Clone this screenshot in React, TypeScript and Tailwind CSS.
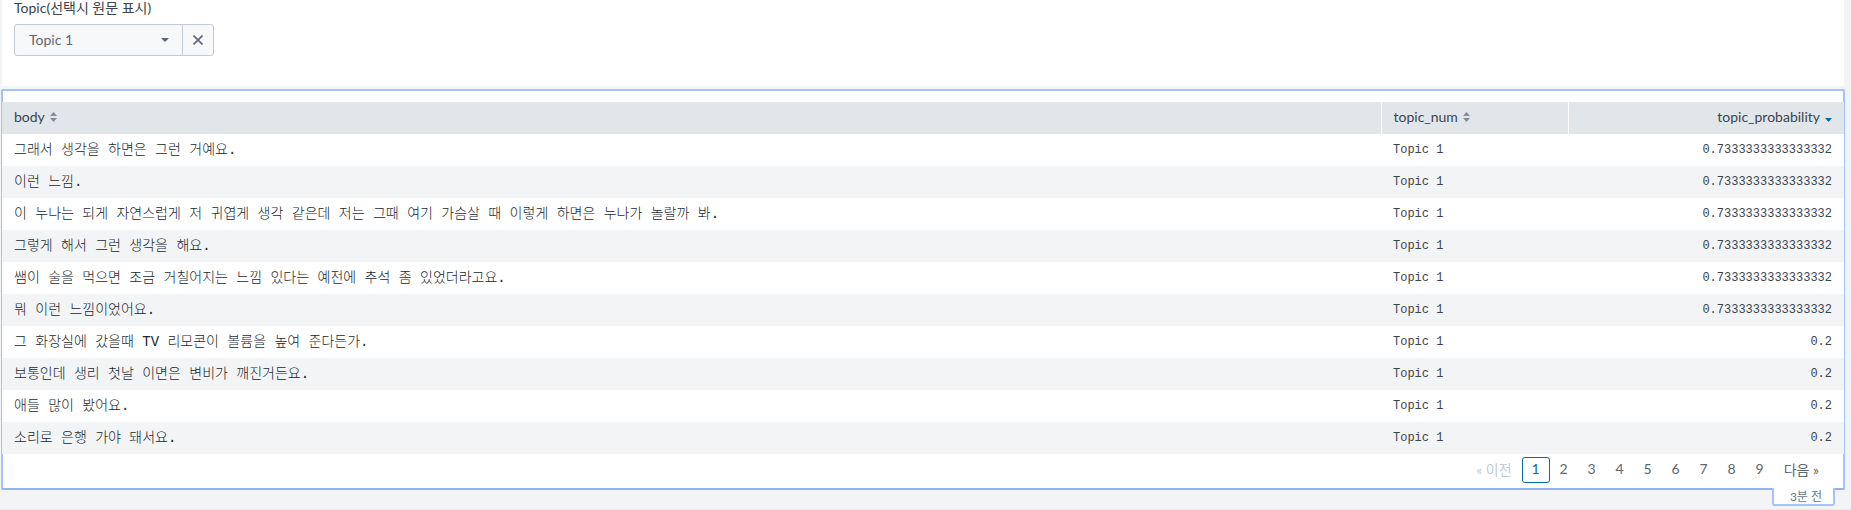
import { useState } from "react";

type Row = { body: string; topic: string; probability: string };

const rows: Row[] = [
  { body: "그래서 생각을 하면은 그런 거예요.", topic: "Topic 1", probability: "0.7333333333333332" },
  { body: "이런 느낌.", topic: "Topic 1", probability: "0.7333333333333332" },
  {
    body: "이 누나는 되게 자연스럽게 저 귀엽게 생각 같은데 저는 그때 여기 가슴살 때 이렇게 하면은 누나가 놀랄까 봐.",
    topic: "Topic 1",
    probability: "0.7333333333333332",
  },
  { body: "그렇게 해서 그런 생각을 해요.", topic: "Topic 1", probability: "0.7333333333333332" },
  {
    body: "쌤이 술을 먹으면 조금 거칠어지는 느낌 있다는 예전에 추석 좀 있었더라고요.",
    topic: "Topic 1",
    probability: "0.7333333333333332",
  },
  { body: "뭐 이런 느낌이었어요.", topic: "Topic 1", probability: "0.7333333333333332" },
  { body: "그 화장실에 갔을때 TV 리모콘이 볼륨을 높여 준다든가.", topic: "Topic 1", probability: "0.2" },
  { body: "보통인데 생리 첫날 이면은 변비가 깨진거든요.", topic: "Topic 1", probability: "0.2" },
  { body: "애들 많이 봤어요.", topic: "Topic 1", probability: "0.2" },
  { body: "소리로 은행 가야 돼서요.", topic: "Topic 1", probability: "0.2" },
];

const pages = [1, 2, 3, 4, 5, 6, 7, 8, 9];

function SortIcon() {
  return (
    <svg className="h-2.5 w-[7px] shrink-0" viewBox="0 0 7 10" fill="#818d99" aria-hidden="true">
      <path d="M0 4 3.5 0 7 4ZM0 6H7L3.5 10Z" />
    </svg>
  );
}

function Caret({ className }: { className: string }) {
  return (
    <svg className={className} viewBox="0 0 8 4" preserveAspectRatio="none" fill="currentColor" aria-hidden="true">
      <path d="M0 0H8L4 4Z" />
    </svg>
  );
}

export default function App() {
  const [topic, setTopic] = useState("Topic 1");
  const [page, setPage] = useState(1);

  return (
    <div className="min-h-screen border-b border-[#e8eaec] bg-[#f2f4f5] font-['Lato','Noto_Sans_CJK_KR',sans-serif] text-sm text-[#3c444d]">
      <section className="mr-[7px] ml-0.5 bg-white px-3 pb-[30px]">
        <label htmlFor="topic" className="block h-6 leading-4">
          Topic(선택시 원문 표시)
        </label>
        <div className="flex h-8">
          <div className="relative">
            <select
              id="topic"
              value={topic}
              onChange={(e) => setTopic(e.target.value)}
              className="h-8 w-[169px] appearance-none rounded-l-[3px] border border-[#c3cbd4] bg-[#f7f8fa] pr-8 pb-px pl-3.5 text-[#5c6773]"
            >
              <option>Topic 1</option>
              <option>Topic 2</option>
            </select>
            <Caret className="pointer-events-none absolute top-3.5 right-3.5 h-1 w-2 text-[#5c6773]" />
          </div>
          <button
            type="button"
            aria-label="Clear"
            className="-ml-px flex w-8 items-center justify-center rounded-r-[3px] border border-[#c3cbd4] bg-[#f7f8fa] text-[#5c6773]"
          >
            <svg className="size-2.5" viewBox="0 0 10 10" stroke="currentColor" strokeWidth="1.6" aria-hidden="true">
              <path d="M0.5 0.5 9.5 9.5M9.5 0.5 0.5 9.5" />
            </svg>
          </button>
        </div>
      </section>

      <section className="relative mt-[3px] mr-1.5 ml-px rounded-xs border-2 border-[#a3c2ff] border-b-[#8fb3f5] bg-white pt-[11px]">
        <div className="-mx-px">
          <table className="w-full table-fixed border-collapse">
            <colgroup>
              <col />
              <col className="w-[187px]" />
              <col className="w-[276px]" />
            </colgroup>
            <thead>
              <tr className="h-8 bg-[#e1e6eb]">
                <th scope="col" className="px-3 pb-0.5 text-left font-normal">
                  <span className="flex items-center gap-[5px]">
                    body <SortIcon />
                  </span>
                </th>
                <th scope="col" className="border-l border-white px-3 pb-0.5 text-left font-normal">
                  <span className="flex items-center gap-[5px]">
                    topic_num <SortIcon />
                  </span>
                </th>
                <th scope="col" className="border-l border-white px-3 pb-0.5 font-normal">
                  <span className="flex items-center justify-end gap-[5px]">
                    topic_probability <Caret className="mt-1.5 h-1 w-[7px] text-[#006eaa]" />
                  </span>
                </th>
              </tr>
            </thead>
            <tbody>
              {rows.map((row) => (
                <tr key={row.body} className="h-8 bg-white even:bg-[#f2f4f5]">
                  <td className="px-3 font-['Liberation_Mono','Noto_Sans_CJK_KR',monospace] leading-4 font-light text-[#20272e]">
                    {row.body}
                  </td>
                  <td className="px-3 font-['Liberation_Mono',monospace] text-xs">{row.topic}</td>
                  <td className="px-3 text-right font-['Liberation_Mono',monospace] text-xs">{row.probability}</td>
                </tr>
              ))}
            </tbody>
          </table>
        </div>

        <nav aria-label="Pagination" className="flex h-[34px] items-center justify-end pr-3 pb-0.5 text-[#5c6773]">
          <button type="button" disabled className="h-[26px] px-2.5 text-[#c3cbd4]">
            « 이전
          </button>
          {pages.map((n) => (
            <button
              key={n}
              type="button"
              aria-current={n === page ? "page" : undefined}
              onClick={() => setPage(n)}
              className={
                n === page
                  ? "h-[26px] w-7 rounded-[3px] border border-[#006eaa] pb-0.5 text-[#006eaa]"
                  : "h-[26px] w-7 pb-0.5 text-[#5c6773]"
              }
            >
              {n}
            </button>
          ))}
          <button type="button" className="h-[26px] pr-3 pl-2.5">
            다음 »
          </button>
        </nav>

        <div className="absolute top-full right-2 flex h-[18px] w-[63px] items-end justify-end rounded-b-[3px] border-2 border-t-0 border-[#a3c2ff] bg-white pr-[11px] text-xs leading-[14px] text-[#6b7785]">
          3분 전
        </div>
      </section>
    </div>
  );
}
